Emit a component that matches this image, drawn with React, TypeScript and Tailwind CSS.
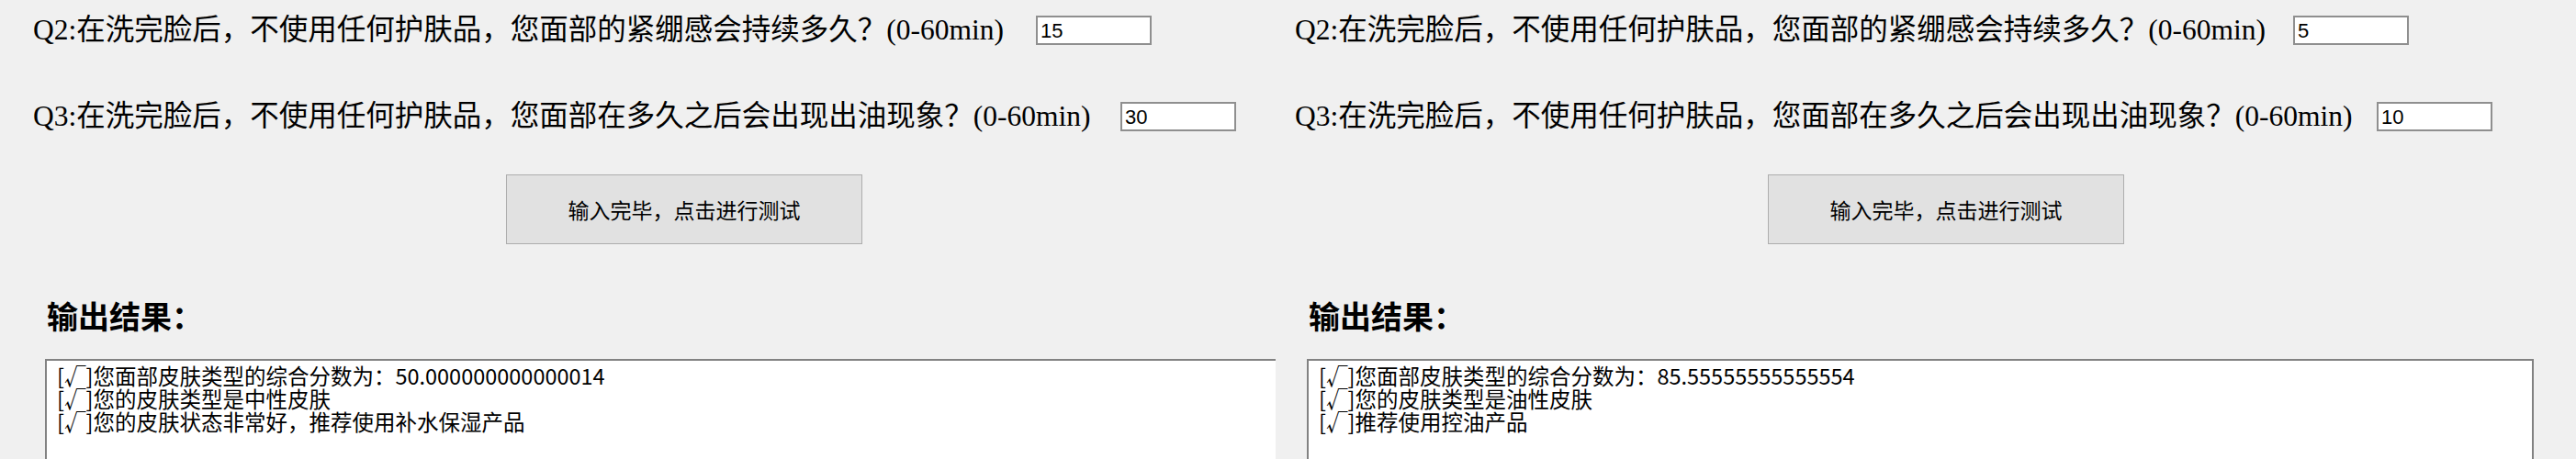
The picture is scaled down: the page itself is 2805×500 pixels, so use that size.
import React from "react";

interface PanelProps {
  q2: string;
  q3: string;
  lines: string[];
  q2Label: string;
  q3Label: string;
  boxClass: string;
}

function Panel({ q2, q3, lines, q2Label, q3Label, boxClass }: PanelProps) {
  return (
    <div className="flex w-[1374px] shrink-0 flex-col">
      <div className="mt-[17px] flex h-[32px] shrink-0 items-center">
        <span
          className={`${q2Label} shrink-0 whitespace-nowrap pl-[36px] font-['Liberation_Serif','Noto_Sans_CJK_SC',serif] text-[31.5px] leading-none text-black`}
        >
          Q2:在洗完脸后，不使用任何护肤品，您面部的紧绷感会持续多久？(0-60min)
        </span>
        <input
          readOnly
          value={q2}
          className="h-[32px] w-[126px] border-2 border-[#8f8f8f] bg-white px-[3px] font-['Liberation_Sans',sans-serif] text-[22px] text-black outline-none"
        />
      </div>

      <div className="mt-[62px] flex h-[32px] shrink-0 items-center">
        <span
          className={`${q3Label} shrink-0 whitespace-nowrap pl-[36px] font-['Liberation_Serif','Noto_Sans_CJK_SC',serif] text-[31.5px] leading-none text-black`}
        >
          Q3:在洗完脸后，不使用任何护肤品，您面部在多久之后会出现出油现象？(0-60min)
        </span>
        <input
          readOnly
          value={q3}
          className="h-[32px] w-[126px] border-2 border-[#8f8f8f] bg-white px-[3px] font-['Liberation_Sans',sans-serif] text-[22px] text-black outline-none"
        />
      </div>

      <button
        type="button"
        className="mt-[47px] ml-[551px] flex h-[76px] w-[388px] shrink-0 items-center justify-center border border-[#adadad] bg-[#e1e1e1] font-['Noto_Sans_CJK_SC',sans-serif] text-[23px] text-black"
      >
        输入完毕，点击进行测试
      </button>

      <h2 className="mt-[61px] ml-[51px] h-[40px] shrink-0 font-['Liberation_Serif','Noto_Sans_CJK_SC',serif] text-[34px] leading-[40px] font-bold text-black">
        输出结果：
      </h2>

      <div
        className={`${boxClass} mt-[24px] ml-[49px] h-[140px] shrink-0 border-[#828282] bg-white pt-[4px] pl-[11px] font-['Noto_Sans_CJK_SC',sans-serif] text-[23.5px] leading-[25px] text-black`}
      >
        {lines.map((line, i) => (
          <div key={i} className="h-[25px] whitespace-nowrap">
            {line}
          </div>
        ))}
      </div>
    </div>
  );
}

export default function App() {
  return (
    <div className="flex h-[500px] w-[2805px] overflow-hidden bg-[#f0f0f0]">
      <Panel
        q2="15"
        q3="30"
        q2Label="w-[1128px]"
        q3Label="w-[1220px]"
        boxClass="w-[1340px] border-t-2 border-l-2"
        lines={[
          "[√]您面部皮肤类型的综合分数为：50.000000000000014",
          "[√]您的皮肤类型是中性皮肤",
          "[√]您的皮肤状态非常好，推荐使用补水保湿产品",
        ]}
      />
      <Panel
        q2="5"
        q3="10"
        q2Label="w-[1123px]"
        q3Label="w-[1214px]"
        boxClass="w-[1336px] border-2"
        lines={[
          "[√]您面部皮肤类型的综合分数为：85.55555555555554",
          "[√]您的皮肤类型是油性皮肤",
          "[√]推荐使用控油产品",
        ]}
      />
    </div>
  );
}
